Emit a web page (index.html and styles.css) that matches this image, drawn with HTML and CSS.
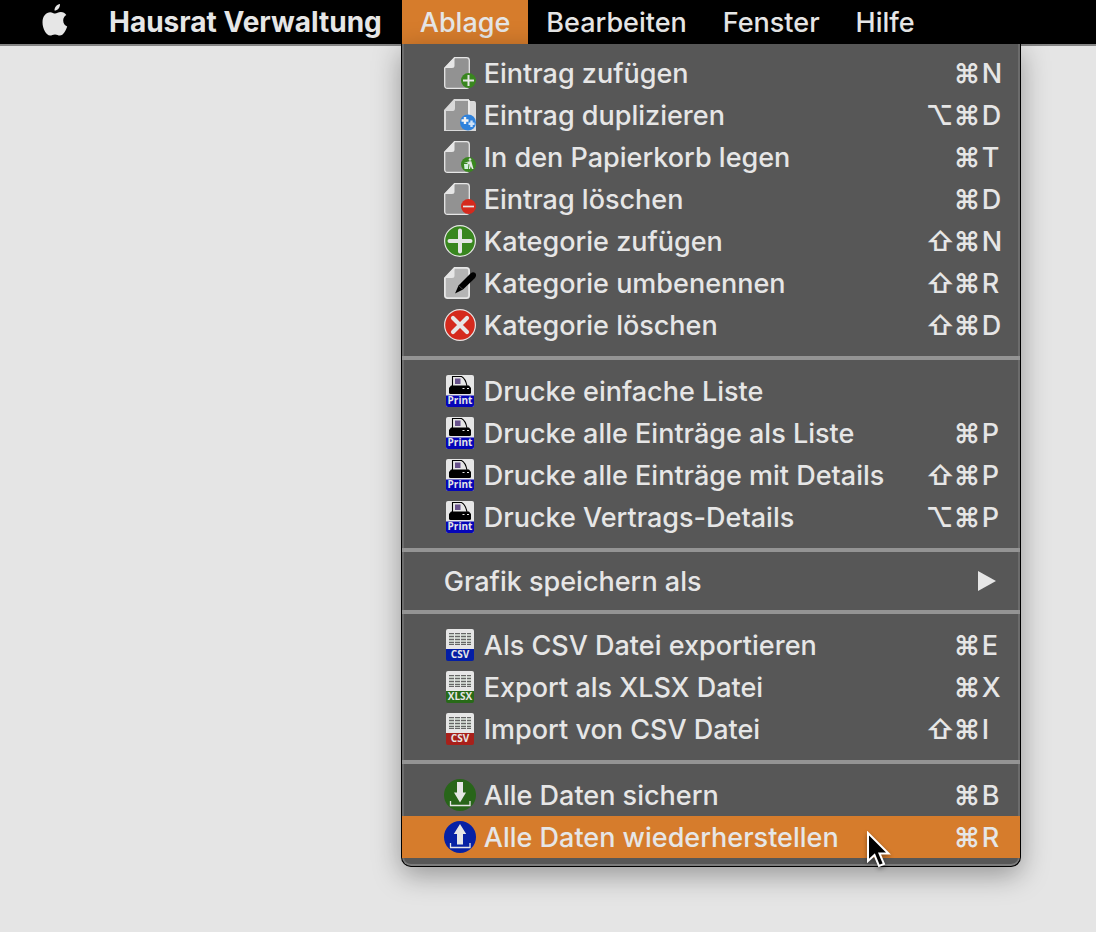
FILE: index.html
```html
<!DOCTYPE html>
<html lang="de">
<head>
    <meta charset="UTF-8">
    <meta name="viewport" content="width=device-width, initial-scale=1.0">
    <title>Hausrat Verwaltung</title>
    <link rel="stylesheet" href="styles.css">
</head>
<body>
    <!-- Symbole -->
    <svg class="symbols" aria-hidden="true">
        <symbol id="page" viewBox="0 0 32 32">
            <path d="M10.500 0.700H22.500Q25.300 0.700 25.300 3.500V28.500Q25.300 31.300 22.500 31.300H3.500Q0.700 31.300 0.700 28.500V11Z" fill="#929292" stroke="#e6e6e6" stroke-width="1.300"/>
            <path d="M10.500 0.500V8.500Q10.500 11 8 11H0.500Z" fill="#e6e6e6"/>
        </symbol>
        <symbol id="entry-add" viewBox="0 0 32 32">
            <use href="#page"/>
            <circle cx="24.500" cy="23.500" r="7.500" fill="#39861f"/>
            <path d="M24.500 18V29M19 23.500H30" stroke="#e6e6e6" stroke-width="2"/>
        </symbol>
        <symbol id="entry-copy" viewBox="0 0 32 32">
            <path d="M0 11 10 0H25V2H30Q32 2 32 5V32H0Z" fill="#d9d9d9"/>
            <path d="M11 2H24V31H2V12H9Q11 12 11 9Z" fill="#979797"/>
            <path d="M25 1V16" stroke="#f2f2f2" stroke-width="1.500"/>
            <circle cx="24" cy="23.500" r="8" fill="#2f82dc"/>
            <path d="M21 18V25M17.500 21.500H24.500" stroke="#f2f2f2" stroke-width="2.400"/>
            <path d="M27.500 21.500V28M24.500 24.800H30.500" stroke="#cfe2f7" stroke-width="2.400"/>
        </symbol>
        <symbol id="entry-trash" viewBox="0 0 32 32">
            <use href="#page"/>
            <circle cx="24.500" cy="23.500" r="7.500" fill="#39861f"/>
            <path d="M20 23H24.500L24 28H20.500ZM19.800 21.800 24.500 20.500V21.800Z" fill="#d5f3df"/>
            <circle cx="26" cy="18.500" r="1.300" fill="#e6e6e6"/>
            <path d="M25 20.300H27.300L29.500 28H28L26.700 25.200 26 28H24.800L25.500 23.500 23 22.500Z" fill="#e6e6e6"/>
        </symbol>
        <symbol id="entry-delete" viewBox="0 0 32 32">
            <use href="#page"/>
            <circle cx="24.500" cy="23.500" r="7.500" fill="#d52a1d"/>
            <path d="M19 23.500H30" stroke="#e6e6e6" stroke-width="1.700"/>
        </symbol>
        <symbol id="cat-add" viewBox="0 0 32 32">
            <circle cx="16" cy="16" r="15.400" fill="#39861f" stroke="#e6e6e6" stroke-width="1.200"/>
            <path d="M16 5.500V26.500M5.500 16H26.500" stroke="#e6e6e6" stroke-width="4" stroke-linecap="round"/>
        </symbol>
        <symbol id="cat-rename" viewBox="0 0 32 32">
            <path d="M10.500 0.900H22.500Q25.100 0.900 25.100 3.500V28.500Q25.100 31.100 22.500 31.100H3.500Q0.900 31.100 0.900 28.500V11Z" fill="#b5b5b5" stroke="#e6e6e6" stroke-width="1.800"/>
            <path d="M10.500 0.500V8.500Q10.500 11 8 11H0.500Z" fill="#e6e6e6"/>
            <path d="M11 26.500 14.500 18.500 26.500 6.500Q29 4.500 31.200 6 33 8 31 11L19 22.500Z" fill="#000"/>
            <path d="M14.500 18.500 19 22.500" stroke="#777" stroke-width="0.600"/>
        </symbol>
        <symbol id="cat-delete" viewBox="0 0 32 32">
            <circle cx="16" cy="16" r="15.400" fill="#d52a1d" stroke="#e6e6e6" stroke-width="1.200"/>
            <path d="M9 9 23 23M23 9 9 23" stroke="#e6e6e6" stroke-width="4.200" stroke-linecap="round"/>
        </symbol>
        <symbol id="printer" viewBox="0 0 32 32">
            <rect x="2" width="28" height="32" rx="2" fill="#e6e6e6"/>
            <path d="M2 20.500H30V30Q30 32 28 32H4Q2 32 2 30Z" fill="#0505b8"/>
            <path d="M8.500 11V1.500H17.500Q21.500 3.500 23 11" fill="none" stroke="#000" stroke-width="1.100"/>
            <rect x="11" y="3.500" width="5.500" height="5.500" fill="#67518b"/>
            <path d="M7 10.500H25L27 13V17.500Q27 19 25.500 19H6.500Q5 19 5 17.500V13Z" fill="#000"/>
            <path d="M18.500 13.500H20.500M23 13.500H25" stroke="#e6e6e6" stroke-width="1.200"/>
        </symbol>
        <symbol id="sheet" viewBox="0 0 32 32">
            <path d="M4 0H28Q30 0 30 2V20H2V2Q2 0 4 0Z" fill="#e6e6e6"/>
            <rect x="5" y="4" width="22" height="12" fill="#c4cbc4"/>
            <path d="M5 4.500H27M5 7.500H27M5 10.500H27M5 13.500H27M5 15.500H27" stroke="#666" stroke-width="1"/>
            <path d="M10.500 4V16M16.500 4V16M22.500 4V16" stroke="#e6e6e6" stroke-width="1"/>
            <path d="M2 20H30V30Q30 32 28 32H4Q2 32 2 30Z" fill="currentColor"/>
        </symbol>
        <symbol id="backup" viewBox="0 0 32 32">
            <circle cx="16" cy="16" r="16" fill="#286519"/>
            <path d="M13 3H19V13.500H22L16 23.500 10 13.500H13Z" fill="#e6e6e6"/>
            <path d="M6.500 22V26.500H26V22" fill="none" stroke="#e6e6e6" stroke-width="1.300"/>
        </symbol>
        <symbol id="restore" viewBox="0 0 32 32">
            <circle cx="16" cy="16" r="16" fill="#0721a5"/>
            <path d="M16 3 22.200 13H19V23.500H13V13H9.800Z" fill="#e6e6e6"/>
            <path d="M6.500 22V26.500H26V22" fill="none" stroke="#e6e6e6" stroke-width="1.300"/>
        </symbol>
    </svg>

    <nav class="menubar">
        <button class="apple" aria-label="Apple">
            <svg width="26" height="32" viewBox="0 0 26 32">
                <path d="M18 0C18.200 3.800 15.300 6.700 12.500 6.600 12.300 3.200 15 0.400 18 0Z"/>
                <path d="M24.300 10.900C22.200 12.300 21.200 14 21.200 16.400 21.200 19.300 22.800 21.400 25.200 22.400 24.200 25.600 21.500 31.500 17.800 31.500 16 31.500 15.300 30.400 13 30.400 10.700 30.400 9.800 31.500 8.100 31.500 4.200 31.500 0.500 24.500 0.500 18.200 0.500 11.900 4.300 8.200 8.200 8.200 10.300 8.200 11.700 9.600 13.200 9.600 14.700 9.600 16.200 8 18.900 8 21.200 8 23.100 9.100 24.300 10.900Z"/>
            </svg>
        </button>
        <button class="app-name">Hausrat Verwaltung</button>
        <div class="dropdown">
            <button class="active" aria-expanded="true">Ablage</button>
            <div class="menu">
                <ul>
                    <li><button><svg><use href="#entry-add"/></svg>Eintrag zufügen<kbd><span>⌘</span><b>N</b></kbd></button></li>
                    <li><button><svg><use href="#entry-copy"/></svg>Eintrag duplizieren<kbd><span>⌥</span><span>⌘</span><b>D</b></kbd></button></li>
                    <li><button><svg><use href="#entry-trash"/></svg>In den Papierkorb legen<kbd><span>⌘</span><b>T</b></kbd></button></li>
                    <li><button><svg><use href="#entry-delete"/></svg>Eintrag löschen<kbd><span>⌘</span><b>D</b></kbd></button></li>
                    <li><button><svg><use href="#cat-add"/></svg>Kategorie zufügen<kbd><span>⇧</span><span>⌘</span><b>N</b></kbd></button></li>
                    <li><button><svg><use href="#cat-rename"/></svg>Kategorie umbenennen<kbd><span>⇧</span><span>⌘</span><b>R</b></kbd></button></li>
                    <li><button><svg><use href="#cat-delete"/></svg>Kategorie löschen<kbd><span>⇧</span><span>⌘</span><b>D</b></kbd></button></li>
                </ul>
                <ul>
                    <li><button><svg><use href="#printer"/><text x="16" y="29">Print</text></svg>Drucke einfache Liste</button></li>
                    <li><button><svg><use href="#printer"/><text x="16" y="29">Print</text></svg>Drucke alle Einträge als Liste<kbd><span>⌘</span><b>P</b></kbd></button></li>
                    <li><button><svg><use href="#printer"/><text x="16" y="29">Print</text></svg>Drucke alle Einträge mit Details<kbd><span>⇧</span><span>⌘</span><b>P</b></kbd></button></li>
                    <li><button><svg><use href="#printer"/><text x="16" y="29">Print</text></svg>Drucke Vertrags-Details<kbd><span>⌥</span><span>⌘</span><b>P</b></kbd></button></li>
                </ul>
                <ul class="submenu">
                    <li><button>Grafik speichern als<i class="arrow"></i></button></li>
                </ul>
                <ul>
                    <li><button><svg class="blue"><use href="#sheet"/><text x="16" y="29">CSV</text></svg>Als CSV Datei exportieren<kbd><span>⌘</span><b>E</b></kbd></button></li>
                    <li><button><svg class="green"><use href="#sheet"/><text x="16" y="29">XLSX</text></svg>Export als XLSX Datei<kbd><span>⌘</span><b>X</b></kbd></button></li>
                    <li><button><svg class="red"><use href="#sheet"/><text x="16" y="29">CSV</text></svg>Import von CSV Datei<kbd><span>⇧</span><span>⌘</span><b>I</b></kbd></button></li>
                </ul>
                <ul>
                    <li><button><svg><use href="#backup"/></svg>Alle Daten sichern<kbd><span>⌘</span><b>B</b></kbd></button></li>
                    <li class="selected">
                        <button><svg><use href="#restore"/></svg>Alle Daten wiederherstellen<kbd><span>⌘</span><b>R</b></kbd></button>
                        <svg class="cursor" viewBox="0 0 26 38">
                            <path d="M2 2V30L8.500 24 13 35 18 33 13.500 22.500H22.500Z" fill="#000" stroke="#fff" stroke-width="2"/>
                        </svg>
                    </li>
                </ul>
            </div>
        </div>
        <button>Bearbeiten</button>
        <button>Fenster</button>
        <button>Hilfe</button>
    </nav>
</body>
</html>
```
FILE: styles.css
```css
body {
    margin: 0;
    min-height: 100vh;
    background-color: #e5e5e5;
    font-family: Inter, "Liberation Sans", sans-serif;
    font-size: 27px;
    font-weight: 500;
}
.symbols {
    position: absolute;
    width: 0;
    height: 0;
}
button {
    margin: 0;
    padding: 0;
    border: none;
    background: none;
    color: #e6e6e6;
    font: inherit;
    text-align: left;
    white-space: nowrap;
}

/* Menüleiste */
.menubar {
    display: flex;
    height: 44px;
    background-color: #000;
    border-bottom: 2px solid #858585;
}
.menubar > button, .dropdown > button {
    height: 44px;
    padding: 0 18px;
}
.menubar > .apple {
    display: flex;
    align-items: center;
    padding: 0 23px 4px 42px;
}
.apple svg {
    fill: #e6e6e6;
}
.menubar > .app-name {
    padding-right: 20px;
    font-size: 28px;
    font-weight: 700;
}
.dropdown {
    position: relative;
}
.dropdown > .active {
    background-color: #d67c2c;
}

/* Aufgeklapptes Menü */
.menu {
    position: absolute;
    top: 44px;
    left: -1px;
    width: 618px;
    padding-bottom: 8px;
    background-color: #575757;
    border: 1px solid #000;
    border-top: none;
    border-radius: 0 0 10px 10px;
    box-shadow: inset 0 -2px #7c7c7c, inset 2px 0 #6c6c6c, inset -2px 0 #6c6c6c, 0 8px 28px rgba(0,0,0,0.35);
}
.menu ul {
    list-style: none;
    margin: 0;
    padding: 10px 0;
    border-bottom: 4px solid #949494;
}
.menu ul:first-child {
    padding-top: 8px;
}
.menu ul:last-child {
    padding-bottom: 0;
    border-bottom: none;
}
.menu .submenu {
    padding: 8px 0;
}
.menu li {
    position: relative;
}
.menu li button {
    display: flex;
    align-items: center;
    width: 100%;
    height: 42px;
    padding: 0 18px 0 42px;
}
.menu button svg {
    width: 32px;
    height: 32px;
    margin-right: 8px;
}
.menu .selected {
    background-color: #d67c2c;
}
kbd {
    display: flex;
    gap: 4px;
    margin-left: auto;
    font-family: inherit;
}
kbd span {
    width: 24px;
    font-weight: 600;
    text-align: center;
}
kbd b {
    width: 20px;
    font-weight: 500;
}
.arrow {
    margin-left: auto;
    margin-right: 6px;
    border-left: 18px solid #e6e6e6;
    border-top: 10px solid transparent;
    border-bottom: 10px solid transparent;
}
.cursor {
    position: absolute;
    top: 15px;
    left: 464px;
    width: 26px;
    height: 38px;
    filter: drop-shadow(0 2px 2px rgba(0,0,0,0.4));
}

/* Beschriftung der Symbole */
.menu svg text {
    font-family: "Open Sans", sans-serif;
    font-weight: 700;
    font-size: 10px;
    text-anchor: middle;
    fill: #e6e6e6;
}
.blue {
    color: #031da5;
}
.green {
    color: #286a18;
}
.red {
    color: #a8201a;
}
```
